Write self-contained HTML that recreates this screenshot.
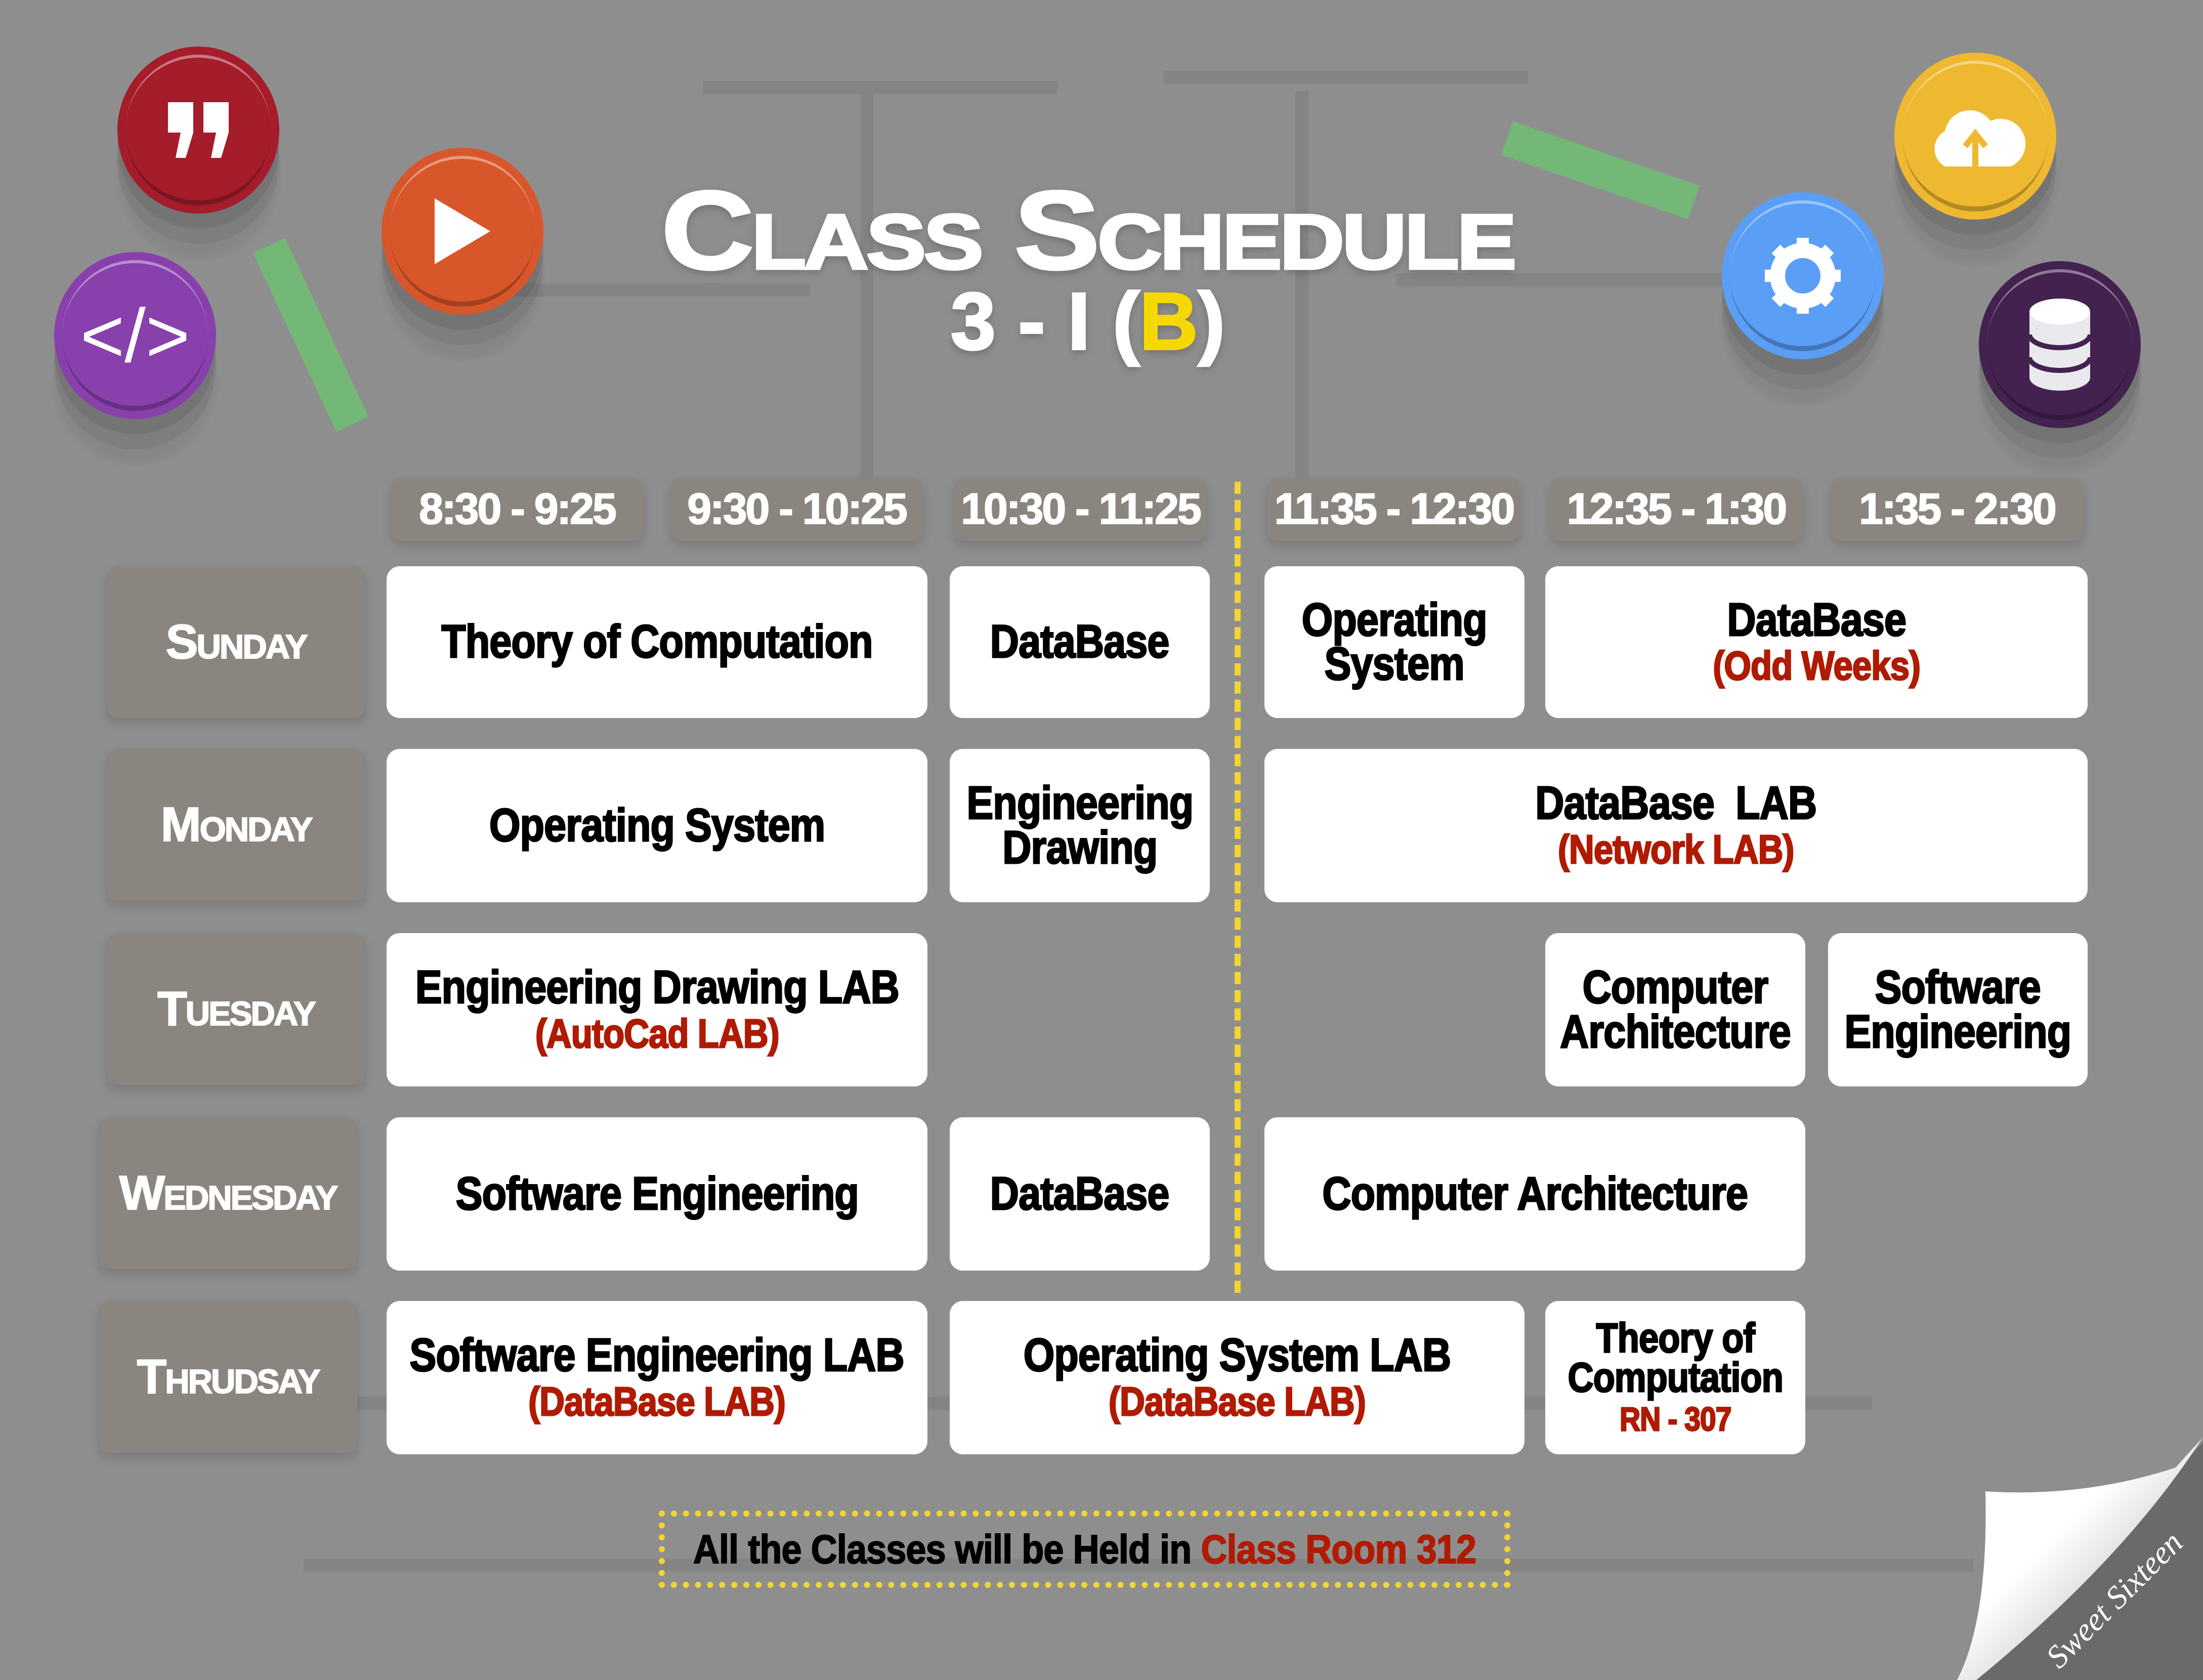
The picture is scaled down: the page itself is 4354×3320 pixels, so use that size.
<!DOCTYPE html>
<html><head><meta charset="utf-8"><style>
*{margin:0;padding:0;box-sizing:border-box}
body{width:4354px;height:3320px;background:#8e8e8e;position:relative;overflow:hidden;font-family:"Liberation Sans",sans-serif;font-weight:bold}
.a{position:absolute;display:flex;align-items:center;justify-content:center;text-align:center;flex-direction:column}
.h{background:#8a857e;border-radius:22px;color:#fff;font-size:86px;box-shadow:0 10px 20px rgba(0,0,0,.15);letter-spacing:-3px;-webkit-text-stroke:2px #fff}
.d{background:#8a857e;border-radius:22px;color:#fff;font-size:96px;font-variant:small-caps;letter-spacing:-3px;box-shadow:0 10px 20px rgba(0,0,0,.15);-webkit-text-stroke:2px #fff}
.w{background:#fff;border-radius:26px;color:#000;font-size:92px;line-height:.95;letter-spacing:-1px;-webkit-text-stroke:3px currentColor}
.w>div{transform:scaleX(.86);white-space:nowrap}
.r{color:#b01a00}
.c{position:absolute;border-radius:50%;width:320px;height:330px;box-shadow:0 30px 0 rgba(0,0,0,.08),0 60px 0 rgba(0,0,0,.06),0 90px 10px rgba(0,0,0,.05);display:flex;align-items:center;justify-content:center;color:#fff}
.c:before{content:"";position:absolute;inset:16px;border-radius:50%;border-top:6px solid rgba(255,255,255,.4);border-bottom:10px solid rgba(0,0,0,.25)}
.ln{position:absolute;background:#848484}
</style></head><body>
<div class="ln" style="left:1390px;top:160px;width:700px;height:26px"></div>
<div class="ln" style="left:2300px;top:140px;width:720px;height:26px"></div>
<div class="ln" style="left:900px;top:560px;width:700px;height:26px"></div>
<div class="ln" style="left:2760px;top:540px;width:800px;height:26px"></div>
<div class="ln" style="left:700px;top:2760px;width:3000px;height:26px"></div>
<div class="ln" style="left:600px;top:3080px;width:3300px;height:26px"></div>
<div class="ln" style="left:1700px;top:180px;width:26px;height:800px"></div>
<div class="ln" style="left:2560px;top:180px;width:26px;height:800px"></div>

<div style="position:absolute;left:500px;top:500px;width:70px;height:390px;background:#74b877;transform:rotate(-25deg);transform-origin:0 0"></div>
<div style="position:absolute;left:2990px;top:240px;width:390px;height:70px;background:#74b877;transform:rotate(19deg);transform-origin:0 0"></div>

<div class="c" style="left:232px;top:92px;background:#a51c2b"><svg width="140" height="130" viewBox="0 0 14 13"><path d="M1 1H6V7L4.5 12H2.5L3.5 7H1Z M8 1H13V7L11.5 12H9.5L10.5 7H8Z" fill="#fff"/></svg></div>
<div class="c" style="left:754px;top:292px;background:#d8572a"><svg width="130" height="150" viewBox="0 0 13 15"><path d="M1 1 L12 7.5 L1 14 Z" fill="#fff"/></svg></div>
<div class="c" style="left:107px;top:498px;background:#8840ad"><span style="font-size:150px;font-weight:normal">&lt;/&gt;</span></div>
<div class="c" style="left:3744px;top:104px;background:#eeb830"><svg width="200" height="140" viewBox="0 0 20 14"><path d="M4 13 A4 4 0 0 1 4 6 A5 5 0 0 1 13 4 A4 4 0 0 1 17 13 Z" fill="#fff"/><path d="M10 13 V7 M8 9 L10 6.5 L12 9" stroke="#eeb830" stroke-width="1.2" fill="none"/></svg></div>
<div class="c" style="left:3403px;top:380px;background:#5b9ef5"><svg width="160" height="160" viewBox="0 0 16 16"><circle cx="8" cy="8" r="5" fill="none" stroke="#fff" stroke-width="3"/><g stroke="#fff" stroke-width="2.4"><path d="M8 0.5V3.5M8 12.5V15.5M0.5 8H3.5M12.5 8H15.5M2.7 2.7L4.8 4.8M11.2 11.2L13.3 13.3M2.7 13.3L4.8 11.2M11.2 4.8L13.3 2.7"/></g></svg></div>
<div class="c" style="left:3911px;top:516px;background:#43224f"><svg width="130" height="190" viewBox="0 0 13 19"><ellipse cx="6.5" cy="3" rx="6" ry="2.6" fill="#fff"/><path d="M0.5 3V16A6 2.6 0 0 0 12.5 16V3A6 2.6 0 0 1 0.5 3Z" fill="#e9e9ee"/><path d="M0.5 7.5A6 2.6 0 0 0 12.5 7.5M0.5 12A6 2.6 0 0 0 12.5 12" stroke="#43224f" stroke-width="1" fill="none"/></svg></div>

<div class="a" style="left:1200px;top:345px;width:1900px;height:220px;color:#fff;font-weight:900;font-size:220px;font-variant:small-caps;letter-spacing:-4px;text-shadow:0 6px 16px rgba(0,0,0,.25);-webkit-text-stroke:5px #fff"><div style="transform:scaleX(1.15);white-space:nowrap">Class Schedule</div></div>
<div class="a" style="left:1800px;top:560px;width:700px;height:150px;color:#fff;font-weight:900;font-size:160px;text-shadow:0 6px 16px rgba(0,0,0,.25);-webkit-text-stroke:4px currentColor"><div style="white-space:nowrap">3 - I (<span style="color:#f5d800">B</span>)</div></div>

<div class="a h" style="left:772px;top:944px;width:500px;height:125px">8:30 - 9:25</div>
<div class="a h" style="left:1325px;top:944px;width:499px;height:125px">9:30 - 10:25</div>
<div class="a h" style="left:1886px;top:944px;width:499px;height:125px">10:30 - 11:25</div>
<div class="a h" style="left:2505px;top:944px;width:500px;height:125px">11:35 - 12:30</div>
<div class="a h" style="left:3063px;top:944px;width:500px;height:125px">12:35 - 1:30</div>
<div class="a h" style="left:3618px;top:944px;width:500px;height:125px">1:35 - 2:30</div>

<div style="position:absolute;left:2440px;top:952px;width:0;height:1603px;border-left:12px dashed #f2d530"></div>

<div class="a d" style="left:211px;top:1119px;width:511px;height:300px">Sunday</div>
<div class="a d" style="left:211px;top:1480px;width:511px;height:300px">Monday</div>
<div class="a d" style="left:211px;top:1844px;width:511px;height:300px">Tuesday</div>
<div class="a d" style="left:195px;top:2208px;width:511px;height:300px">Wednesday</div>
<div class="a d" style="left:195px;top:2571px;width:511px;height:300px">Thrudsay</div>

<div class="a w" style="left:764px;top:1119px;width:1069px;height:300px"><div>Theory of Computation</div></div>
<div class="a w" style="left:1877px;top:1119px;width:514px;height:300px"><div>DataBase</div></div>
<div class="a w" style="left:2499px;top:1119px;width:514px;height:300px"><div>Operating<br>System</div></div>
<div class="a w" style="left:3054px;top:1119px;width:1072px;height:300px"><div>DataBase<br><span class="r" style="font-size:80px">(Odd Weeks)</span></div></div>

<div class="a w" style="left:764px;top:1480px;width:1069px;height:303px"><div>Operating System</div></div>
<div class="a w" style="left:1877px;top:1480px;width:514px;height:303px"><div>Engineering<br>Drawing</div></div>
<div class="a w" style="left:2499px;top:1480px;width:1627px;height:303px"><div>DataBase&nbsp; LAB<br><span class="r" style="font-size:80px">(Network LAB)</span></div></div>

<div class="a w" style="left:764px;top:1844px;width:1069px;height:303px"><div>Engineering Drawing LAB<br><span class="r" style="font-size:80px">(AutoCad LAB)</span></div></div>
<div class="a w" style="left:3054px;top:1844px;width:514px;height:303px"><div>Computer<br>Architecture</div></div>
<div class="a w" style="left:3613px;top:1844px;width:513px;height:303px"><div>Software<br>Engineering</div></div>

<div class="a w" style="left:764px;top:2208px;width:1069px;height:303px"><div>Software Engineering</div></div>
<div class="a w" style="left:1877px;top:2208px;width:514px;height:303px"><div>DataBase</div></div>
<div class="a w" style="left:2499px;top:2208px;width:1069px;height:303px"><div>Computer Architecture</div></div>

<div class="a w" style="left:764px;top:2571px;width:1069px;height:303px"><div>Software Engineering LAB<br><span class="r" style="font-size:80px">(DataBase LAB)</span></div></div>
<div class="a w" style="left:1877px;top:2571px;width:1136px;height:303px"><div>Operating System LAB<br><span class="r" style="font-size:80px">(DataBase LAB)</span></div></div>
<div class="a w" style="left:3054px;top:2571px;width:514px;height:303px;font-size:82px"><div>Theory of<br>Computation<br><span class="r" style="font-size:66px">RN - 307</span></div></div>

<div class="a" style="left:1302px;top:2985px;width:1683px;height:153px;border:12px dotted #f2d530;font-size:80px;color:#000;letter-spacing:-1px;-webkit-text-stroke:2px currentColor"><div style="white-space:nowrap;transform:scaleX(.9)">All the Classes will be Held in <span class="r">Class Room 312</span></div></div>

<svg style="position:absolute;left:3700px;top:2800px" width="654" height="520" viewBox="0 0 654 520">
<defs><linearGradient id="g" x1="0" y1="0" x2="1" y2="1"><stop offset="0.4" stop-color="#fff"/><stop offset="1" stop-color="#999"/></linearGradient></defs>
<path d="M654 50 L654 520 L206 520 Z" fill="#6a6a6a"/>
<path d="M220 147 Q420 160 600 100 L654 40 Q500 280 206 520 L168 520 Q230 400 224 147 Z" fill="url(#g)"/>
<text x="370" y="500" fill="#fff" font-family="Liberation Serif,serif" font-style="italic" font-weight="normal" font-size="64" transform="rotate(-45 370 500)">Sweet Sixteen</text>
</svg>
</body></html>
